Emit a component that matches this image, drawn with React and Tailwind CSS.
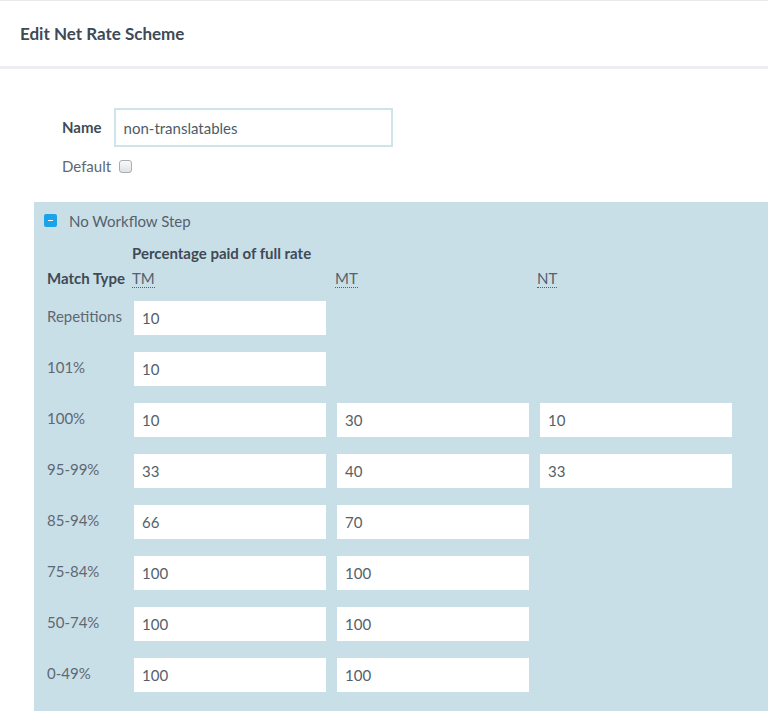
import React from 'react'

const rows = [
	{ label: 'Repetitions', values: ['10'] },
	{ label: '101%', values: ['10'] },
	{ label: '100%', values: ['10', '30', '10'] },
	{ label: '95-99%', values: ['33', '40', '33'] },
	{ label: '85-94%', values: ['66', '70'] },
	{ label: '75-84%', values: ['100', '100'] },
	{ label: '50-74%', values: ['100', '100'] },
	{ label: '0-49%', values: ['100', '100'] },
]

function RateInput({ value }) {
	return (
		<input
			type="text"
			defaultValue={value}
			className="w-[192px] h-[34px] bg-white px-[8px] text-[15px] text-[#555f69] outline-none"
		/>
	)
}

function App() {
	return (
		<div className="min-h-screen bg-white text-[#4d5b68]" style={{ fontFamily: 'Lato, "Open Sans", sans-serif' }}>
			<div className="h-[69px] border-t border-[#e6e9ec] border-b-[3px] border-b-[#eceef1] flex items-center px-[20px]">
				<h2 className="text-[17px] font-bold text-[#3f4a55]">Edit Net Rate Scheme</h2>
			</div>

			<div className="pt-[39px] pl-[62px]">
				<div className="flex items-center gap-[12px]">
					<label className="text-[15px] font-bold text-[#3f4a55]">Name</label>
					<input
						type="text"
						defaultValue="non-translatables"
						className="w-[279px] h-[39px] border-2 border-[#cfe3ea] px-[8px] text-[15px] text-[#4d5b68] outline-none"
					/>
				</div>
				<div className="flex items-center gap-[8px] mt-[8px]">
					<label className="text-[15px] text-[#5d6873]">Default</label>
					<span className="w-[13px] h-[13px] rounded-[3px] border border-[#a8adb2] bg-gradient-to-b from-[#fafafa] to-[#dfe1e3]"></span>
				</div>
			</div>

			<div className="ml-[34px] mt-[24px] bg-[#c9dfe8] pt-[8px] pb-[19px] pl-[10px]">
				<div className="flex items-center gap-[12px]">
					<span className="w-[13px] h-[13px] rounded-[2px] bg-[#1aa3e8] flex items-center justify-center">
						<span className="w-[5px] h-[1px] bg-white"></span>
					</span>
					<span className="text-[15px] text-[#55616c]">No Workflow Step</span>
				</div>

				<div className="pl-[88px] mt-[10px] text-[15px] font-bold text-[#3f4a55]">Percentage paid of full rate</div>

				<div className="flex items-center mt-[2px] text-[15px]">
					<span className="w-[88px] pl-[3px] font-bold text-[#3f4a55]">Match Type</span>
					<abbr title="Translation Memory" className="w-[203px] text-[#55616c] no-underline"><span className="border-b border-dotted border-[#55616c]">TM</span></abbr>
					<abbr title="Machine Translation" className="w-[202px] text-[#55616c] no-underline"><span className="border-b border-dotted border-[#55616c]">MT</span></abbr>
					<abbr title="Non-Translatable" className="text-[#55616c] no-underline"><span className="border-b border-dotted border-[#55616c]">NT</span></abbr>
				</div>

				<div className="mt-[12px] flex flex-col gap-[17px]">
					{rows.map((row) => (
						<div key={row.label} className="flex items-start">
							<span className="w-[90px] pl-[3px] pt-[4px] text-[15px] text-[#5d6873]">{row.label}</span>
							<div className="flex gap-[11px]">
								{row.values.map((v, i) => (
									<RateInput key={i} value={v} />
								))}
							</div>
						</div>
					))}
				</div>
			</div>
		</div>
	)
}

export default App
